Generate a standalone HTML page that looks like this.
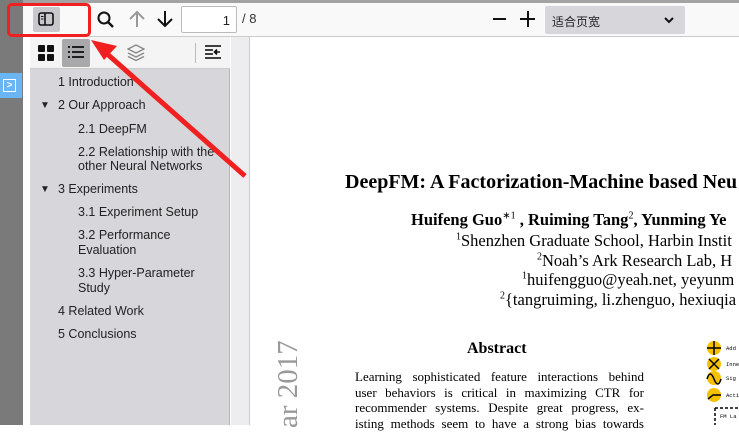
<!DOCTYPE html>
<html><head><meta charset="utf-8"><style>
*{margin:0;padding:0;box-sizing:border-box}
body{width:739px;height:425px;overflow:hidden;position:relative;background:#fff;font-family:"Liberation Sans","Noto Sans CJK SC",sans-serif}
.a{position:absolute}
.toc div{position:absolute;font-size:12.5px;color:#222;line-height:15px;white-space:nowrap}
.s{font-family:"Liberation Serif",serif;color:#000;position:absolute;white-space:nowrap}
.j{position:absolute;left:355px;width:289px;font-family:"Liberation Serif",serif;font-size:13px;text-align:justify;text-align-last:justify;white-space:nowrap;height:16px;overflow:visible}
</style></head><body>
<div class="a" style="left:0;top:0;width:23px;height:425px;background:#7a7a7a"></div>
<div class="a" style="left:0;top:73px;width:22px;height:25px;background:#6ab6f5"></div>
<div class="a" style="left:3px;top:79px;width:13px;height:13px;border:1px solid #fff;color:#fff;font-size:10px;line-height:11px;text-align:center;font-weight:bold">&gt;</div>
<div class="a" style="left:23px;top:0;width:7px;height:425px;background:#fff"></div>
<div class="a" style="left:23px;top:0;width:716px;height:37px;background:#f9f9fa;border-top:3px solid #a3a3a3;border-bottom:1px solid #ccc"></div>
<div class="a" style="left:33px;top:7px;width:27px;height:25px;background:#c8c8cc;border-radius:2px"></div>
<svg class="a" style="left:38px;top:12px" width="16" height="14"><rect x="1" y="1" width="14" height="12" rx="2" fill="none" stroke="#111" stroke-width="1.6"/><line x1="7" y1="1" x2="7" y2="13" stroke="#111" stroke-width="1.6"/><line x1="3" y1="4.5" x2="5.5" y2="4.5" stroke="#111"/><line x1="3" y1="7" x2="5.5" y2="7" stroke="#111"/></svg>
<svg class="a" style="left:96px;top:10px" width="20" height="20"><circle cx="8" cy="8" r="5.5" fill="none" stroke="#111" stroke-width="2"/><line x1="12" y1="12" x2="17" y2="17" stroke="#111" stroke-width="2.4"/></svg>
<svg class="a" style="left:128px;top:9px" width="18" height="20"><path d="M9 18V3M2 10l7-7 7 7" fill="none" stroke="#999" stroke-width="2"/></svg>
<svg class="a" style="left:156px;top:9px" width="18" height="20"><path d="M9 2v15M2 10l7 7 7-7" fill="none" stroke="#111" stroke-width="2"/></svg>
<div class="a" style="left:181px;top:6px;width:56px;height:27px;background:#fff;border:1px solid #bbb;border-radius:2px;font-size:13px;text-align:right;padding:6px 6px 0 0;color:#222">1</div>
<div class="a" style="left:242px;top:11px;font-size:13px;color:#333">/ 8</div>
<div class="a" style="left:493px;top:18px;width:13px;height:2px;background:#111"></div>
<div class="a" style="left:520px;top:18px;width:15px;height:2px;background:#111"></div>
<div class="a" style="left:527px;top:11px;width:2px;height:16px;background:#111"></div>
<div class="a" style="left:545px;top:6px;width:140px;height:28px;background:#d7d7db;border-radius:2px;font-size:12px;color:#222;padding:7px 0 0 7px">适合页宽</div>
<svg class="a" style="left:664px;top:17px" width="10" height="7"><path d="M1 1l4 4 4-4" fill="none" stroke="#111" stroke-width="2"/></svg>
<div class="a" style="left:30px;top:37px;width:200px;height:388px;background:#d7d7db;border-right:1px solid #b5b5b5"></div>
<div class="a" style="left:30px;top:37px;width:200px;height:32px;background:#f4f4f5;border-bottom:1px solid #ccc"></div>
<svg class="a" style="left:38px;top:45px" width="16" height="16"><rect x="0" y="0" width="7" height="7" rx="1" fill="#111"/><rect x="9" y="0" width="7" height="7" rx="1" fill="#111"/><rect x="0" y="9" width="7" height="7" rx="1" fill="#111"/><rect x="9" y="9" width="7" height="7" rx="1" fill="#111"/></svg>
<div class="a" style="left:62px;top:39px;width:28px;height:28px;background:#a9a9ac;border-radius:2px"></div>
<svg class="a" style="left:68px;top:45px" width="16" height="15"><g stroke="#111" stroke-width="1.8"><line x1="0" y1="2" x2="2" y2="2"/><line x1="4" y1="2" x2="16" y2="2"/><line x1="0" y1="7" x2="2" y2="7"/><line x1="4" y1="7" x2="16" y2="7"/><line x1="0" y1="12" x2="2" y2="12"/><line x1="4" y1="12" x2="16" y2="12"/></g></svg>
<svg class="a" style="left:127px;top:44px" width="18" height="17"><path d="M9 1L1 5l8 4 8-4zM1 9l8 4 8-4M1 12.5l8 4 8-4" fill="none" stroke="#888" stroke-width="1.4"/></svg>
<div class="a" style="left:195px;top:43px;width:1px;height:20px;background:#bbb"></div>
<svg class="a" style="left:205px;top:45px" width="16" height="15"><g stroke="#111" stroke-width="1.6"><line x1="0" y1="1" x2="16" y2="1"/><line x1="0" y1="5" x2="8" y2="5"/><line x1="0" y1="9" x2="8" y2="9"/><line x1="0" y1="13" x2="16" y2="13"/><path d="M15 7h-5M12 4.5l-2.5 2.5 2.5 2.5"/></g></svg>
<div class="toc">
<div style="left:58px;top:75px">1 Introduction</div>
<div style="left:40px;top:98px;font-size:10px">▼</div>
<div style="left:58px;top:98px">2 Our Approach</div>
<div style="left:78px;top:122px">2.1 DeepFM</div>
<div style="left:78px;top:145px">2.2 Relationship with the</div>
<div style="left:78px;top:159px">other Neural Networks</div>
<div style="left:40px;top:182px;font-size:10px">▼</div>
<div style="left:58px;top:182px">3 Experiments</div>
<div style="left:78px;top:205px">3.1 Experiment Setup</div>
<div style="left:78px;top:228px">3.2 Performance</div>
<div style="left:78px;top:243px">Evaluation</div>
<div style="left:78px;top:266px">3.3 Hyper-Parameter</div>
<div style="left:78px;top:281px">Study</div>
<div style="left:58px;top:304px">4 Related Work</div>
<div style="left:58px;top:327px">5 Conclusions</div>
</div>
<div class="a" style="left:231px;top:37px;width:19px;height:388px;background:#ededf0"></div>
<div class="a" style="left:249px;top:37px;width:1px;height:388px;background:#ccc"></div>
<div class="s" style="left:345px;top:171px;font-size:20px;font-weight:bold">DeepFM: A Factorization-Machine based Neu</div>
<div class="s" style="left:411px;top:210px;font-size:16.5px;font-weight:bold">Huifeng Guo<sup style="font-size:10px;font-weight:normal">∗1</sup> , Ruiming Tang<sup style="font-size:10px;font-weight:normal">2</sup>, Yunming Ye</div>
<div class="s" style="left:456px;top:231px;font-size:16.5px"><sup style="font-size:10px">1</sup>Shenzhen Graduate School, Harbin Instit</div>
<div class="s" style="left:537px;top:251px;font-size:16.5px"><sup style="font-size:10px">2</sup>Noah’s Ark Research Lab, H</div>
<div class="s" style="left:522px;top:270px;font-size:16.5px"><sup style="font-size:10px">1</sup>huifengguo@yeah.net, yeyunm</div>
<div class="s" style="left:500px;top:290px;font-size:16.5px"><sup style="font-size:10px">2</sup>{tangruiming, li.zhenguo, hexiuqia</div>
<div class="s" style="left:467px;top:340px;font-size:16px;font-weight:bold">Abstract</div>
<div class="j" style="top:369px">Learning sophisticated feature interactions behind</div>
<div class="j" style="top:385px">user behaviors is critical in maximizing CTR for</div>
<div class="j" style="top:400px">recommender systems. Despite great progress, ex-</div>
<div class="j" style="top:416px">isting methods seem to have a strong bias towards</div>
<div class="s" style="left:272px;top:428px;font-size:29px;color:#999;transform:rotate(-90deg);transform-origin:0 0;">ar 2017</div>
<svg class="a" style="left:705px;top:340px" width="34" height="85"><g fill="#f5c000"><circle cx="9" cy="8" r="7"/><circle cx="9" cy="24" r="7"/><circle cx="9" cy="38" r="7"/><circle cx="9" cy="55" r="7"/></g><g stroke="#000" stroke-width="1.5" fill="none"><path d="M2 8h14M9 1v14M4 19l10 10M14 19l-10 10M2 39q3-10 7 0t7 0M3 59l5-4h8"/><path d="M10 68h26M10 68v20" stroke-dasharray="3 2"/></g><g font-size="5.5" font-family="Liberation Mono"><text x="21" y="10">Add</text><text x="21" y="26">Inne</text><text x="21" y="40">Sig</text><text x="21" y="57">Acti</text><text x="15" y="78">FM La</text></g></svg>
<div class="a" style="left:7px;top:3px;width:84px;height:34px;border:3px solid #f02020;border-radius:5px"></div>
<svg class="a" style="left:0;top:0" width="260" height="190"><path d="M245 176L105 52" stroke="#f02020" stroke-width="5"/><path d="M91 40l26 6-13 14z" fill="#f02020"/></svg>
</body></html>
